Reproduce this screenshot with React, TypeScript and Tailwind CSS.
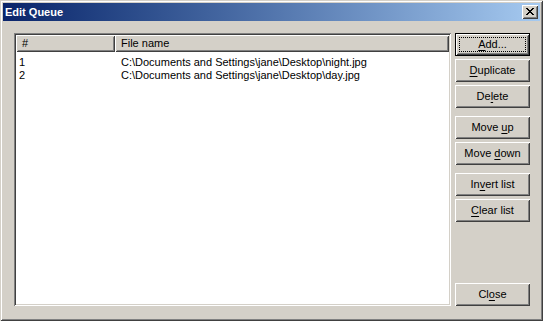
import React from 'react';

const raised =
  'shadow-[inset_1px_1px_0_#ffffff,inset_-1px_-1px_0_#404040,inset_2px_2px_0_#d4d0c8,inset_-2px_-2px_0_#808080]';

interface BtnProps {
  label: string;
  mnemonic: number;
  isDefault?: boolean;
  className?: string;
}

const Btn: React.FC<BtnProps> = ({ label, mnemonic, isDefault, className }) => {
  const before = label.slice(0, mnemonic);
  const key = label.charAt(mnemonic);
  const after = label.slice(mnemonic + 1);
  return (
    <div
      className={
        'relative h-[23px] w-[75px] bg-[#d4d0c8] flex items-center justify-center leading-none ' +
        (isDefault ? 'border border-black ' : '') +
        (className ?? '')
      }
    >
      <div className={'absolute inset-0 ' + raised} />
      {isDefault && <div className="absolute inset-[3px] border border-dotted border-black" />}
      <span className="relative">
        {before}
        <span className="underline underline-offset-[2px]">{key}</span>
        {after}
      </span>
    </div>
  );
};

const files = [
  'C:\\Documents and Settings\\jane\\Desktop\\night.jpg',
  'C:\\Documents and Settings\\jane\\Desktop\\day.jpg',
];

// classic 8x7 close glyph
const xPixels = [
  [0, 0, 2], [6, 0, 2],
  [1, 1, 2], [5, 1, 2],
  [2, 2, 4],
  [3, 3, 2],
  [2, 4, 4],
  [1, 5, 2], [5, 5, 2],
  [0, 6, 2], [6, 6, 2],
];

export default function App() {
  return (
    <div className="w-[543px] h-[321px] bg-[#d4d0c8] p-[3px] flex flex-col text-[11px] text-black font-['Liberation_Sans',Arial,sans-serif] shadow-[inset_1px_1px_0_#d4d0c8,inset_-1px_-1px_0_#404040,inset_2px_2px_0_#ffffff,inset_-2px_-2px_0_#808080]">
      {/* title bar */}
      <div className="h-[18px] flex items-center justify-between pl-[2px] pr-[2px] bg-gradient-to-r from-[#0a246a] to-[#a6caf0]">
        <span className="text-white font-bold text-[11px] leading-none pt-[1px]">Edit Queue</span>
        <div className={'w-[16px] h-[14px] bg-[#d4d0c8] flex items-center justify-center ' + raised}>
          <svg width="8" height="7" viewBox="0 0 8 7" shapeRendering="crispEdges" className="mt-[-1px] ml-[-1px]">
            {xPixels.map(([x, y, w], i) => (
              <rect key={i} x={x} y={y} width={w} height={1} fill="#000" />
            ))}
          </svg>
        </div>
      </div>

      {/* body */}
      <div className="flex-1 flex gap-[4px] pt-[12px] pl-[11px] pr-[10px] pb-[12px]">
        <div className="w-[437px] bg-white p-[2px] flex flex-col shadow-[inset_1px_1px_0_#808080,inset_-1px_-1px_0_#ffffff,inset_2px_2px_0_#404040,inset_-2px_-2px_0_#d4d0c8]">
          <div className="flex h-[17px] bg-[#d4d0c8] leading-[17px]">
            <div className={'w-[99px] pl-[6px] ' + raised}>#</div>
            <div className={'flex-1 pl-[6px] ' + raised}>File name</div>
          </div>
          <div className="pt-[4px]">
            {files.map((f, i) => (
              <div key={i} className="flex h-[13px] leading-[13px]">
                <div className="w-[99px] pl-[3px]">{i + 1}</div>
                <div className="flex-1 pl-[6px]">{f}</div>
              </div>
            ))}
          </div>
        </div>

        <div className="w-[75px] flex flex-col">
          <Btn label="Add..." mnemonic={0} isDefault />
          <Btn label="Duplicate" mnemonic={0} className="mt-[3px]" />
          <Btn label="Delete" mnemonic={2} className="mt-[3px]" />
          <Btn label="Move up" mnemonic={5} className="mt-[8px]" />
          <Btn label="Move down" mnemonic={5} className="mt-[3px]" />
          <Btn label="Invert list" mnemonic={2} className="mt-[8px]" />
          <Btn label="Clear list" mnemonic={0} className="mt-[3px]" />
          <Btn label="Close" mnemonic={2} className="mt-auto" />
        </div>
      </div>
    </div>
  );
}
